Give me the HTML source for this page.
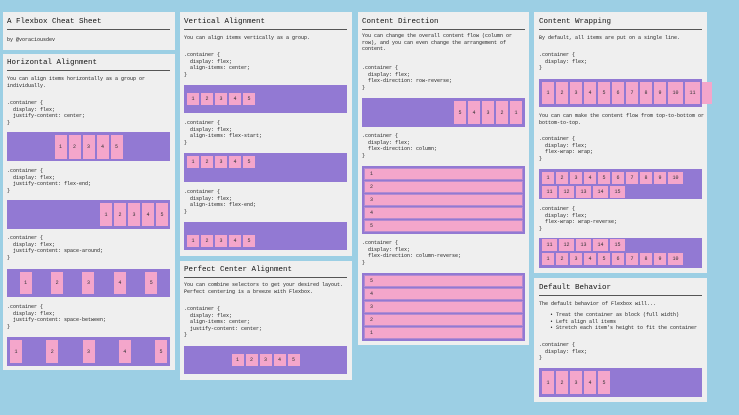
<!DOCTYPE html>
<html><head><meta charset="utf-8"><style>
*{margin:0;padding:0;box-sizing:border-box}
body{width:739px;height:415px;background:#9ccfe4;position:relative;overflow:hidden;font-family:"Liberation Mono",monospace;color:#222}
.card{position:absolute;background:#efefef}
.t{position:absolute;font-size:7.5px;line-height:9px;color:#111;white-space:pre}
.hr{position:absolute;height:1px;background:#555}
.p{position:absolute;font-size:5px;line-height:6.5px;white-space:pre;color:#1a1a1a}
.box{position:absolute;background:#9279d3;display:flex;padding:3px}
.box div{background:#f4a6cb;width:12px;margin-right:2px;font-size:5px;display:flex;align-items:center;justify-content:center;color:#333;flex:none}
.col{flex-direction:column;padding:2px}
.col div{width:auto;height:11.5px;margin:0 0 1.5px 0;justify-content:flex-start;padding-left:5px;border:1px solid #b48ad0}
</style></head><body>
<!-- col1 -->
<div class="card" style="left:3px;top:12px;width:172px;height:38px"></div>
<div class="t" style="left:7px;top:18px">A Flexbox Cheat Sheet</div>
<div class="hr" style="left:7px;top:29px;width:163px"></div>
<div class="p" style="left:7px;top:37px">by @voraciousdev</div>
<div class="card" style="left:3px;top:54px;width:172px;height:316px"></div>
<div class="t" style="left:7px;top:59px">Horizontal Alignment</div>
<div class="hr" style="left:7px;top:70px;width:163px"></div>
<div class="p" style="left:7px;top:76px">You can align items horizontally as a group or
individually.</div>
<div class="p" style="left:7px;top:100px">.container {
  display: flex;
  justify-content: center;
}</div>
<div class="box" style="left:7px;top:132px;width:163px;height:29px;justify-content:center;padding:3px 0 2px 2px"><div>1</div><div>2</div><div>3</div><div>4</div><div>5</div></div>
<div class="p" style="left:7px;top:168px">.container {
  display: flex;
  justify-content: flex-end;
}</div>
<div class="box" style="left:7px;top:200px;width:163px;height:29px;justify-content:flex-end;padding:3px 0 3px 0"><div>1</div><div>2</div><div>3</div><div>4</div><div>5</div></div>
<div class="p" style="left:7px;top:235px">.container {
  display: flex;
  justify-content: space-around;
}</div>
<div class="box" style="left:7px;top:269px;width:163px;height:28px;justify-content:space-around"><div style="margin:0">1</div><div style="margin:0">2</div><div style="margin:0">3</div><div style="margin:0">4</div><div style="margin:0">5</div></div>
<div class="p" style="left:7px;top:304px">.container {
  display: flex;
  justify-content: space-between;
}</div>
<div class="box" style="left:7px;top:337px;width:163px;height:29px;justify-content:space-between"><div style="margin:0">1</div><div style="margin:0">2</div><div style="margin:0">3</div><div style="margin:0">4</div><div style="margin:0">5</div></div>
<!-- col2 -->
<div class="card" style="left:180px;top:12px;width:172px;height:244px"></div>
<div class="t" style="left:184px;top:18px">Vertical Alignment</div>
<div class="hr" style="left:184px;top:29px;width:163px"></div>
<div class="p" style="left:184px;top:35px">You can align items vertically as a group.</div>
<div class="p" style="left:184px;top:52px">.container {
  display: flex;
  align-items: center;
}</div>
<div class="box" style="left:184px;top:85px;width:163px;height:28px;align-items:center"><div style="height:12px">1</div><div style="height:12px">2</div><div style="height:12px">3</div><div style="height:12px">4</div><div style="height:12px">5</div></div>
<div class="p" style="left:184px;top:120px">.container {
  display: flex;
  align-items: flex-start;
}</div>
<div class="box" style="left:184px;top:153px;width:163px;height:29px;align-items:flex-start"><div style="height:12px">1</div><div style="height:12px">2</div><div style="height:12px">3</div><div style="height:12px">4</div><div style="height:12px">5</div></div>
<div class="p" style="left:184px;top:189px">.container {
  display: flex;
  align-items: flex-end;
}</div>
<div class="box" style="left:184px;top:222px;width:163px;height:28px;align-items:flex-end"><div style="height:12px">1</div><div style="height:12px">2</div><div style="height:12px">3</div><div style="height:12px">4</div><div style="height:12px">5</div></div>
<div class="card" style="left:180px;top:261px;width:172px;height:119px"></div>
<div class="t" style="left:184px;top:266px">Perfect Center Alignment</div>
<div class="hr" style="left:184px;top:277px;width:163px"></div>
<div class="p" style="left:184px;top:282px">You can combine selectors to get your desired layout.
Perfect centering is a breeze with Flexbox.</div>
<div class="p" style="left:184px;top:306px">.container {
  display: flex;
  align-items: center;
  justify-content: center;
}</div>
<div class="box" style="left:184px;top:346px;width:163px;height:28px;align-items:center;justify-content:center;padding-left:5px"><div style="height:12px">1</div><div style="height:12px">2</div><div style="height:12px">3</div><div style="height:12px">4</div><div style="height:12px">5</div></div>
<!-- col3 -->
<div class="card" style="left:358px;top:12px;width:171px;height:333px"></div>
<div class="t" style="left:362px;top:18px">Content Direction</div>
<div class="hr" style="left:362px;top:29px;width:163px"></div>
<div class="p" style="left:362px;top:33px">You can change the overall content flow (column or
row), and you can even change the arrangement of
content.</div>
<div class="p" style="left:362px;top:65px">.container {
  display: flex;
  flex-direction: row-reverse;
}</div>
<div class="box" style="left:362px;top:98px;width:163px;height:29px;justify-content:flex-end;padding:3px 1px 3px 0"><div>5</div><div>4</div><div>3</div><div>2</div><div>1</div></div>
<div class="p" style="left:362px;top:133px">.container {
  display: flex;
  flex-direction: column;
}</div>
<div class="box col" style="left:362px;top:166px;width:163px;height:68px"><div>1</div><div>2</div><div>3</div><div>4</div><div>5</div></div>
<div class="p" style="left:362px;top:240px">.container {
  display: flex;
  flex-direction: column-reverse;
}</div>
<div class="box col" style="left:362px;top:273px;width:163px;height:68px"><div>5</div><div>4</div><div>3</div><div>2</div><div>1</div></div>
<!-- col4 -->
<div class="card" style="left:534px;top:12px;width:173px;height:261px"></div>
<div class="t" style="left:539px;top:18px">Content Wrapping</div>
<div class="hr" style="left:539px;top:29px;width:163px"></div>
<div class="p" style="left:539px;top:35px">By default, all items are put on a single line.</div>
<div class="p" style="left:539px;top:52px">.container {
  display: flex;
}</div>
<div class="box" style="left:539px;top:79px;width:163px;height:28px;overflow:visible"><div>1</div><div>2</div><div>3</div><div>4</div><div>5</div><div>6</div><div>7</div><div>8</div><div>9</div><div style="width:15px">10</div><div style="width:15px">11</div><div style="width:10px;margin:0"></div></div>
<div class="p" style="left:539px;top:113px">You can can make the content flow from top-to-bottom or
bottom-to-top.</div>
<div class="p" style="left:539px;top:136px">.container {
  display: flex;
  flex-wrap: wrap;
}</div>
<div class="box" style="left:539px;top:169px;width:163px;height:30px;flex-wrap:wrap;align-content:flex-start"><div style="height:12px;margin-bottom:2px">1</div><div style="height:12px">2</div><div style="height:12px">3</div><div style="height:12px">4</div><div style="height:12px">5</div><div style="height:12px">6</div><div style="height:12px">7</div><div style="height:12px">8</div><div style="height:12px">9</div><div style="height:12px;width:15px">10</div><div style="height:12px;width:15px">11</div><div style="height:12px;width:15px">12</div><div style="height:12px;width:15px">13</div><div style="height:12px;width:15px">14</div><div style="height:12px;width:15px">15</div></div>
<div class="p" style="left:539px;top:206px">.container {
  display: flex;
  flex-wrap: wrap-reverse;
}</div>
<div class="box" style="left:539px;top:238px;width:163px;height:30px;flex-wrap:wrap-reverse;align-content:flex-start"><div style="height:12px;margin-top:2px">1</div><div style="height:12px">2</div><div style="height:12px">3</div><div style="height:12px">4</div><div style="height:12px">5</div><div style="height:12px">6</div><div style="height:12px">7</div><div style="height:12px">8</div><div style="height:12px">9</div><div style="height:12px;width:15px">10</div><div style="height:12px;width:15px">11</div><div style="height:12px;width:15px">12</div><div style="height:12px;width:15px">13</div><div style="height:12px;width:15px">14</div><div style="height:12px;width:15px">15</div></div>
<div class="card" style="left:534px;top:278px;width:173px;height:124px"></div>
<div class="t" style="left:539px;top:284px">Default Behavior</div>
<div class="hr" style="left:539px;top:295px;width:163px"></div>
<div class="p" style="left:539px;top:301px">The default behavior of Flexbox will...</div>
<div class="p" style="left:550px;top:312px">• Treat the container as block (full width)
• Left align all items
• Stretch each item's height to fit the container</div>
<div class="p" style="left:539px;top:342px">.container {
  display: flex;
}</div>
<div class="box" style="left:539px;top:368px;width:163px;height:29px"><div>1</div><div>2</div><div>3</div><div>4</div><div>5</div></div>
</body></html>
